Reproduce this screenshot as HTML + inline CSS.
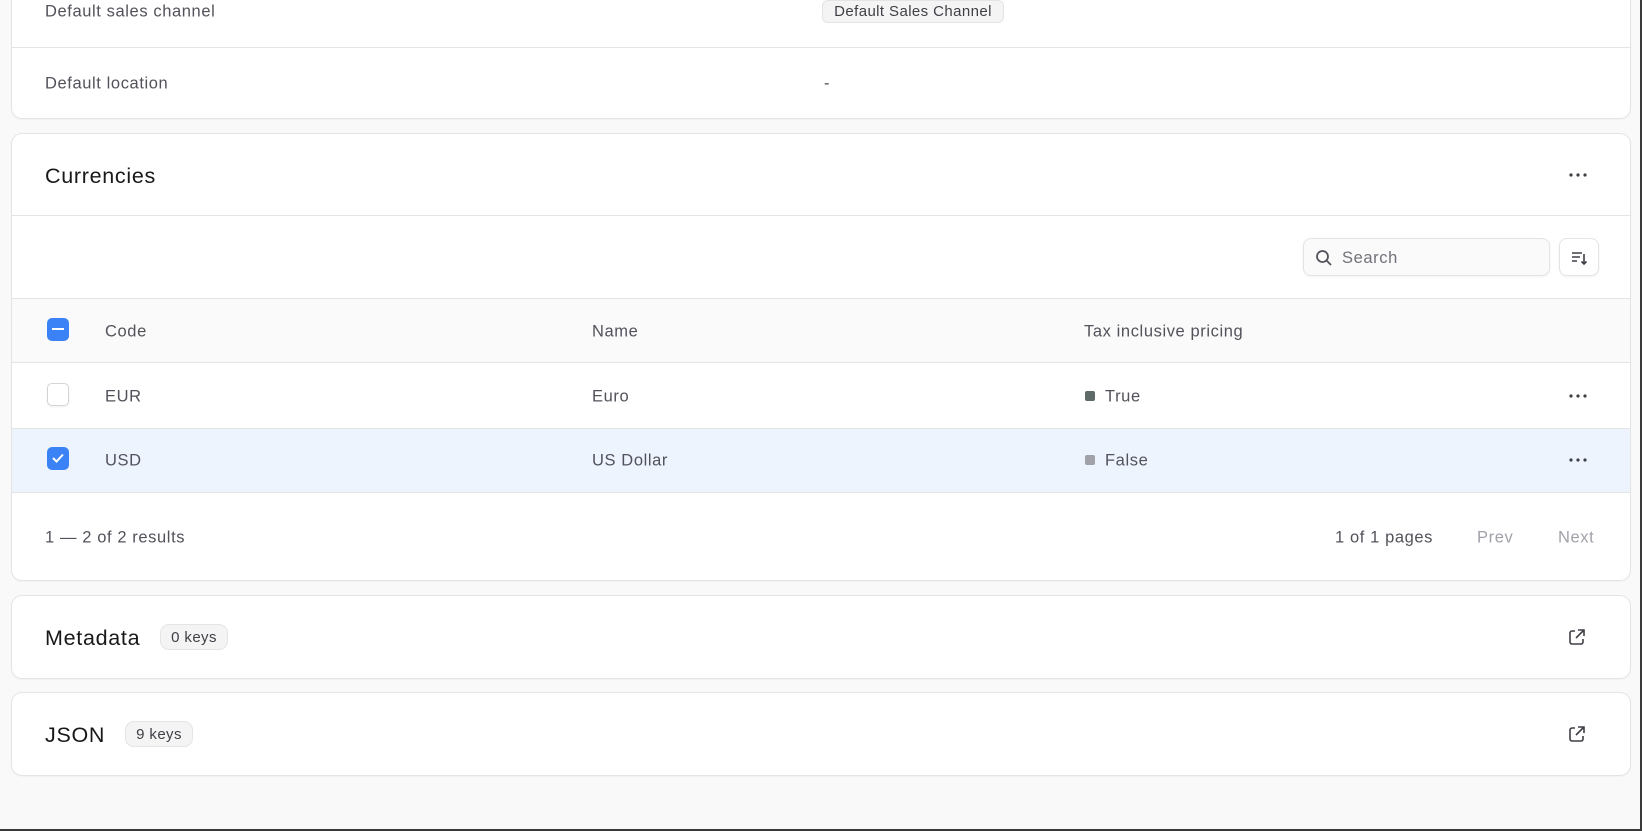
<!DOCTYPE html>
<html><head><style>
*{box-sizing:border-box;margin:0;padding:0}
body{width:1642px;height:831px;background:#f9f9fa;font-family:"Liberation Sans",sans-serif;color:#52525b;position:relative;overflow:hidden;font-size:16.5px;letter-spacing:0.6px}
.card{position:absolute;left:12px;width:1618px;background:#fff;border-radius:10px;box-shadow:0 0 0 1px #e4e4e7,0 1px 2px rgba(0,0,0,.08)}
.a{position:absolute;white-space:nowrap}
.line{position:absolute;left:0;right:0;height:1px;background:#e4e4e7}
.mid{transform:translateY(-45%)}
.badge{position:absolute;background:#f4f4f5;border:1px solid #e4e4e7;border-radius:7px;font-size:15px;color:#3f3f46;display:flex;align-items:center;justify-content:center;letter-spacing:0.4px}
.cb{position:absolute;left:35px;width:22px;height:23px;border-radius:5px}
.h{color:#18181b;font-size:21.5px;letter-spacing:0.7px}
</style></head><body>
<div class="card" style="top:-12px;height:130px">
  <div class="a mid" style="left:33px;top:23px;">Default sales channel</div>
  <div class="badge" style="left:810px;top:12px;width:182px;height:23px;border-radius:6px">Default Sales Channel</div>
  <div class="line" style="top:59px"></div>
  <div class="a mid" style="left:33px;top:95px">Default location</div>
  <div class="a mid" style="left:812px;top:95px">-</div>
</div>
<div class="card" style="top:134px;height:446px;overflow:hidden">
  <div class="a mid h" style="left:33px;top:41px">Currencies</div>
  <svg class="a" style="left:1556px;top:35px" width="20" height="12"><circle cx="3" cy="6" r="1.6" fill="#3f3f46"/><circle cx="10" cy="6" r="1.6" fill="#3f3f46"/><circle cx="17" cy="6" r="1.6" fill="#3f3f46"/></svg>
  <div class="line" style="top:81px"></div>
  <div class="a" style="left:1291px;top:104px;width:247px;height:38px;border:1px solid #e4e4e7;border-radius:8px;background:#fafafa;box-shadow:0 1px 2px rgba(0,0,0,.06)">
    <svg style="position:absolute;left:11px;top:10px" width="18" height="18" viewBox="0 0 18 18" fill="none" stroke="#52525b" stroke-width="1.8"><circle cx="7.5" cy="7.5" r="5.5"/><path d="M11.5 11.5L16 16"/></svg>
    <span style="position:absolute;left:38px;top:10px;color:#71717a">Search</span>
  </div>
  <div class="a" style="left:1547px;top:104px;width:40px;height:38px;border:1px solid #e4e4e7;border-radius:8px;box-shadow:0 1px 2px rgba(0,0,0,.06)">
    <svg style="position:absolute;left:10px;top:10px" width="18" height="18" viewBox="0 0 18 18" fill="none" stroke="#3f3f46" stroke-width="1.6"><path d="M2 4h10M2 8h8M2 12h5M14 5v10M11.5 12.5L14 15l2.5-2.5"/></svg>
  </div>
  <div class="a" style="left:0;right:0;top:164px;height:65px;background:#fafafa;border-top:1px solid #e4e4e7;border-bottom:1px solid #e4e4e7"></div>
  <div class="a" style="left:0;right:0;top:294px;height:65px;background:#eef4fe;border-top:1px solid #e4e4e7;border-bottom:1px solid #e4e4e7"></div>
  <div class="cb" style="top:184px;background:#3b82f6"><div style="position:absolute;left:5px;right:5px;top:10px;height:2px;background:#fff"></div></div>
  <div class="a mid" style="left:93px;top:197px">Code</div>
  <div class="a mid" style="left:580px;top:197px">Name</div>
  <div class="a mid" style="left:1072px;top:197px">Tax inclusive pricing</div>
  <div class="cb" style="top:249px;background:#fff;border:1px solid #d4d4d8;box-shadow:0 1px 2px rgba(0,0,0,.06)"></div>
  <div class="a mid" style="left:93px;top:262px">EUR</div>
  <div class="a mid" style="left:580px;top:262px">Euro</div>
  <div class="a" style="left:1073px;top:257px;width:10px;height:10px;border-radius:2px;background:#5f6b68"></div>
  <div class="a mid" style="left:1093px;top:262px">True</div>
  <svg class="a" style="left:1556px;top:256px" width="20" height="12"><circle cx="3" cy="6" r="1.6" fill="#3f3f46"/><circle cx="10" cy="6" r="1.6" fill="#3f3f46"/><circle cx="17" cy="6" r="1.6" fill="#3f3f46"/></svg>
  <div class="cb" style="top:313px;background:#3b82f6"><svg style="position:absolute;left:4px;top:5px" width="14" height="12" viewBox="0 0 14 12" fill="none" stroke="#fff" stroke-width="2"><path d="M2 6l3.5 3.5L12 2.5"/></svg></div>
  <div class="a mid" style="left:93px;top:326px">USD</div>
  <div class="a mid" style="left:580px;top:326px">US Dollar</div>
  <div class="a" style="left:1073px;top:321px;width:10px;height:10px;border-radius:2px;background:#a1a1aa"></div>
  <div class="a mid" style="left:1093px;top:326px">False</div>
  <svg class="a" style="left:1556px;top:320px" width="20" height="12"><circle cx="3" cy="6" r="1.6" fill="#3f3f46"/><circle cx="10" cy="6" r="1.6" fill="#3f3f46"/><circle cx="17" cy="6" r="1.6" fill="#3f3f46"/></svg>
  <div class="a mid" style="left:33px;top:403px">1 — 2 of 2 results</div>
  <div class="a mid" style="left:1323px;top:403px">1 of 1 pages</div>
  <div class="a mid" style="left:1465px;top:403px;color:#a1a1aa">Prev</div>
  <div class="a mid" style="left:1546px;top:403px;color:#a1a1aa">Next</div>
</div>
<div class="card" style="top:596px;height:82px">
  <div class="a mid h" style="left:33px;top:41px">Metadata</div>
  <div class="badge" style="left:148px;top:28px;width:68px;height:26px;border-radius:9px">0 keys</div>
  <svg class="a" style="left:1555px;top:31px" width="20" height="20" viewBox="0 0 20 20" fill="none" stroke="#3f3f46" stroke-width="1.6"><path d="M8 4H5a2 2 0 0 0-2 2v9a2 2 0 0 0 2 2h9a2 2 0 0 0 2-2v-3M11 3h6v6M17 3l-8 8"/></svg>
</div>
<div class="card" style="top:693px;height:82px">
  <div class="a mid h" style="left:33px;top:41px">JSON</div>
  <div class="badge" style="left:113px;top:28px;width:68px;height:26px;border-radius:9px">9 keys</div>
  <svg class="a" style="left:1555px;top:31px" width="20" height="20" viewBox="0 0 20 20" fill="none" stroke="#3f3f46" stroke-width="1.6"><path d="M8 4H5a2 2 0 0 0-2 2v9a2 2 0 0 0 2 2h9a2 2 0 0 0 2-2v-3M11 3h6v6M17 3l-8 8"/></svg>
</div>
<div class="a" style="right:0;top:0;width:2px;height:831px;background:#3a3a3a"></div>
<div class="a" style="left:0;bottom:0;width:1642px;height:2px;background:#3a3a3a"></div>
</body></html>
